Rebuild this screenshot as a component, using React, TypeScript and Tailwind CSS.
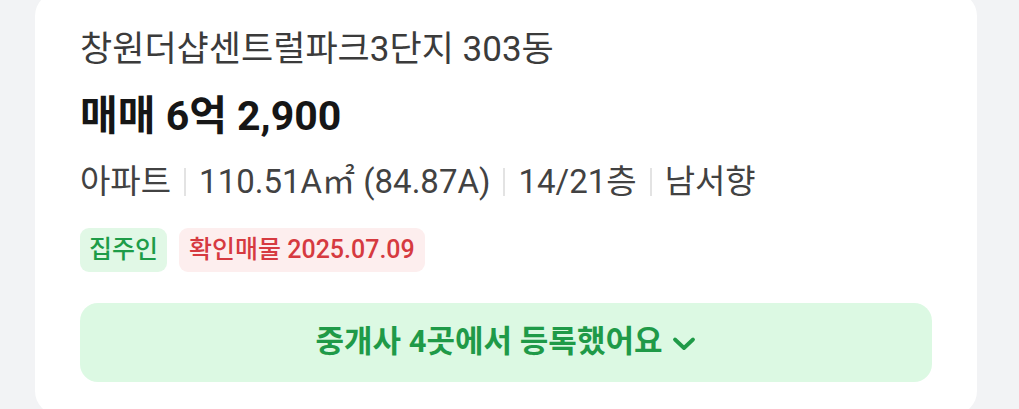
const font = { fontFamily: 'Roboto, "Noto Sans CJK KR", sans-serif' };

const Divider = () => <span className="mx-[13px] inline-block h-[28px] w-[2px] bg-[#e3e3e3]" />;

const Chevron = () => (
  <svg width="24" height="16" viewBox="0 0 24 16" fill="none" className="ml-[4px] mt-[2px]">
    <path d="M3 3.5 12 12l9-8.5" stroke="currentColor" strokeWidth="3.8" strokeLinecap="round" strokeLinejoin="round" />
  </svg>
);

export default function App() {
  const info = ["아파트", "110.51A㎡ (84.87A)", "14/21층", "남서향"];

  return (
    <div className="h-[409px] w-[1019px] overflow-hidden bg-[#f2f3f5]" style={font}>
      <div className="ml-[35px] mt-[-8px] w-[942px] rounded-[24px] bg-white pb-[33px] pl-[45px] pr-[45px] pt-[36px]">
        <div className="text-[35px] leading-[44px] text-[#3b3b3b]">창원더샵센트럴파크3단지 303동</div>

        <div className="mt-[20px] text-[41px] font-bold leading-[48px] text-[#161616]">매매 6억 2,900</div>

        <div className="mt-[20px] flex items-center text-[33px] leading-[44px] text-[#424242]">
          {info.map((item, i) => (
            <span key={item} className="flex items-center">
              {i > 0 && <Divider />}
              {item}
            </span>
          ))}
        </div>

        <div className="mt-[24px] flex gap-[12px]">
          <span className="flex h-[44px] items-center rounded-[9px] bg-[#e1f8e6] px-[9px] text-[25px] font-medium text-[#1e9c48]">
            집주인
          </span>
          <span className="flex h-[44px] items-center rounded-[9px] bg-[#fdeeee] px-[10px] text-[25px] font-medium text-[#d63a40]">
            확인매물 2025.07.09
          </span>
        </div>

        <button className="mt-[31px] flex h-[79px] w-full items-center justify-center gap-[6px] rounded-[18px] bg-[#dcf9e3] text-[31px] font-bold text-[#1f9a48]">
          중개사 4곳에서 등록했어요
          <Chevron />
        </button>
      </div>
    </div>
  );
}
